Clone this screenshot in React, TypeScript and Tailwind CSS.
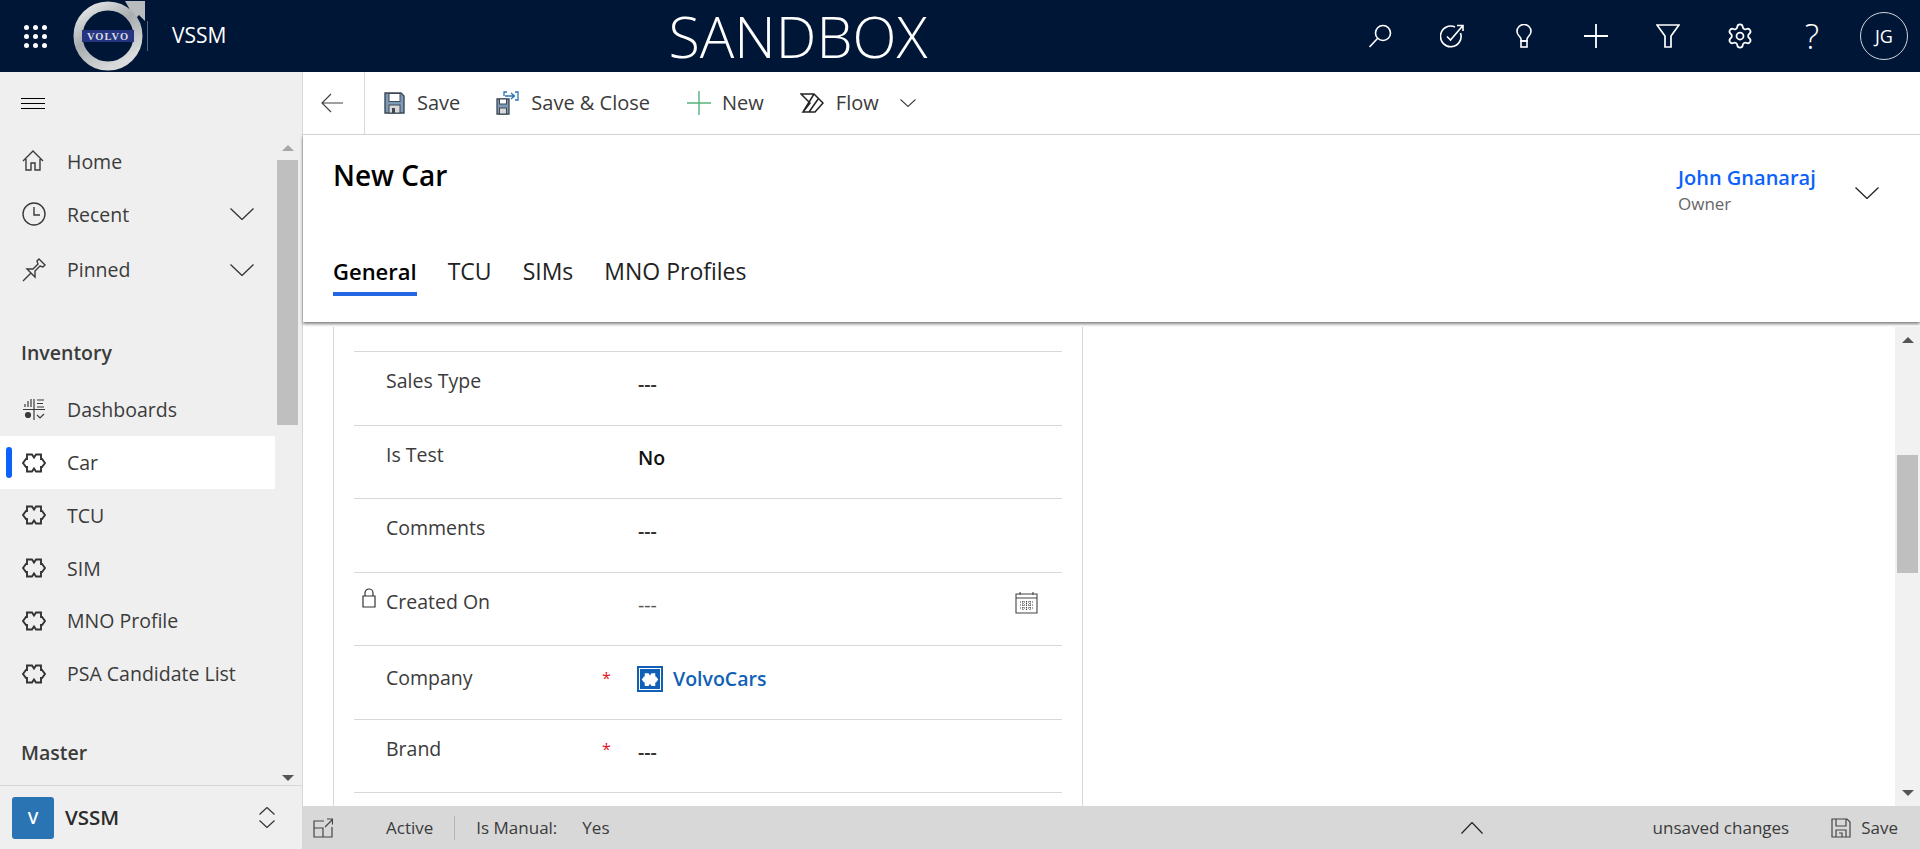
import { Settings } from "lucide-react";

function Puzzle({ className = "h-5 w-6 text-[#333]" }: { className?: string }) {
  return (
    <svg viewBox="0 0 24 20" className={className} fill="none" stroke="currentColor" strokeWidth="1.9">
      <path d="M5 1.5H10L12 4.5L14 1.5H19V6H20L23 10L20 14H19V18.5H14L12 15.5L10 18.5H5V14H4L1 10L4 6H5Z" />
    </svg>
  );
}

function FloppyColor({ className = "h-[22px] w-[21px]" }: { className?: string }) {
  return (
    <svg viewBox="0 0 21 22" className={className}>
      <path d="M1 1H17L20 4V21H1Z" fill="#7d9bb8" stroke="#3d4854" strokeWidth="1.4" />
      <rect x="5" y="1.5" width="11" height="8" fill="#fff" stroke="#3d4854" strokeWidth="1" />
      <rect x="5" y="13" width="11" height="8" fill="#d8d8d8" stroke="#3d4854" strokeWidth="1" />
      <rect x="8" y="16" width="3" height="5" fill="#3d4854" />
    </svg>
  );
}

function VolvoLogo() {
  return (
    <svg viewBox="0 0 74 72" className="h-[72px] w-[74px] shrink-0">
      <defs>
        <linearGradient id="ring" x1="0" y1="0" x2="0.6" y2="1">
          <stop offset="0" stopColor="#eceeee" />
          <stop offset="0.5" stopColor="#a9adb0" />
          <stop offset="1" stopColor="#d9dadb" />
        </linearGradient>
      </defs>
      <path d="M56 8L52 1H72V21L66 15L59 22Z" fill="#b9bcbf" />
      <circle cx="35" cy="36" r="30" fill="#001636" stroke="url(#ring)" strokeWidth="9" />
      <rect x="9" y="30" width="52" height="12" fill="#26357f" />
      <text x="35" y="39.5" textAnchor="middle" fontFamily="Liberation Serif, serif" fontWeight="700" fontSize="10.5" letterSpacing="1" fill="#d8dce6">
        VOLVO
      </text>
    </svg>
  );
}

const topIcons = [
  <svg key="search" viewBox="0 0 24 24" className="h-6 w-6" fill="none" stroke="#fff" strokeWidth="1.6">
    <circle cx="15" cy="9" r="7.5" />
    <path d="M9.5 14.5L1.5 23" />
  </svg>,
  <svg key="task" viewBox="0 0 24 24" className="h-6 w-6" fill="none" stroke="#fff" strokeWidth="1.6">
    <path d="M20.5 9A10.3 10.3 0 1 1 15 3" />
    <path d="M7 12.5L10.5 16L22.5 2M17 1.5H23V7" />
  </svg>,
  <svg key="bulb" viewBox="0 0 24 24" className="h-6 w-6" fill="none" stroke="#fff" strokeWidth="1.6">
    <path d="M9 17V15C9 13 5 11.5 5 7.5A7 7 0 0 1 19 7.5C19 11.5 15 13 15 15V17Z" />
    <rect x="9" y="17" width="6" height="6" />
  </svg>,
  <svg key="plus" viewBox="0 0 24 24" className="h-6 w-6" fill="none" stroke="#fff" strokeWidth="1.8">
    <path d="M12 0V24M0 12H24" />
  </svg>,
  <svg key="filter" viewBox="0 0 24 24" className="h-6 w-6" fill="none" stroke="#fff" strokeWidth="1.7">
    <path d="M1 1H23L15 12V23H9V12Z" />
  </svg>,
  <Settings key="gear" className="h-7 w-7 text-white" strokeWidth={1.5} />,
  <span key="help" className="text-[34px] leading-none font-light text-white">?</span>,
];

function NavRow({ label, icon, chevron, active }: { label: string; icon: React.ReactNode; chevron?: boolean; active?: boolean }) {
  return (
    <div className={`relative flex h-[52.8px] items-center pl-[22px] text-[#3b3b3b] ${active ? "bg-white" : ""}`}>
      {active && <span className="absolute top-[11px] left-[6px] h-[31px] w-[6px] rounded-[3px] bg-[#0b62fb]" />}
      <span className="flex w-[45px] shrink-0 items-center">{icon}</span>
      <span className="flex-1">{label}</span>
      {chevron && (
        <svg viewBox="0 0 24 12" className="mr-[21px] h-3 w-6" fill="none" stroke="#333" strokeWidth="1.3">
          <path d="M.5 .5L12 11.5L23.5 .5" />
        </svg>
      )}
    </div>
  );
}

function Sidebar() {
  return (
    <aside className="flex w-[303px] shrink-0 flex-col border-r border-[#d6d6d6] bg-[#efefef] text-[19.5px]">
      <div className="flex h-[63px] shrink-0 flex-col justify-center gap-[4px] pl-[21px]">
        <span className="h-px w-6 bg-black" />
        <span className="h-px w-6 bg-black" />
        <span className="h-px w-6 bg-black" />
      </div>
      <div className="flex min-h-0 flex-1 overflow-hidden">
        <nav className="w-[275px] shrink-0">
          <NavRow
            label="Home"
            icon={
              <svg viewBox="0 0 22 22" className="h-[22px] w-[22px]" fill="none" stroke="#3b3b3b" strokeWidth="1.4">
                <path d="M1 11L11 1L21 11M4 9V20H9V13H13V20H18V9" />
              </svg>
            }
          />
          <NavRow
            label="Recent"
            chevron
            icon={
              <svg viewBox="0 0 24 24" className="h-6 w-6" fill="none" stroke="#3b3b3b" strokeWidth="1.4">
                <circle cx="12" cy="12" r="11" />
                <path d="M12 5V13H18" />
              </svg>
            }
          />
          <div className="pt-[3px]">
            <NavRow
              label="Pinned"
              chevron
              icon={
                <svg viewBox="0 0 24 24" className="h-6 w-6" fill="none" stroke="#3b3b3b" strokeWidth="1.4">
                  <path d="M1 23L9 15M5 11L11 11L16 6L15 3L17 1L23 7L21 9L18 8L13 13L13 19Z" />
                </svg>
              }
            />
          </div>
          <div className="flex h-[87px] items-end pb-[16px] pl-[21px] font-semibold text-[#3b3b3b]">Inventory</div>
          <NavRow
            label="Dashboards"
            icon={
              <svg viewBox="0 0 24 24" className="h-6 w-6" fill="none" stroke="#3b3b3b" strokeWidth="1.2">
                <path d="M3 9V6M6 9V3M9 9V1M1 11.5H23M12 1V22M15 2H22M15 5.5H21M15 9H22M15 17L18 20L22 16" />
                <circle cx="6" cy="17" r="2.5" fill="#3b3b3b" />
              </svg>
            }
          />
          <NavRow label="Car" active icon={<Puzzle />} />
          <NavRow label="TCU" icon={<Puzzle />} />
          <NavRow label="SIM" icon={<Puzzle />} />
          <NavRow label="MNO Profile" icon={<Puzzle />} />
          <NavRow label="PSA Candidate List" icon={<Puzzle />} />
          <div className="flex h-[67px] items-end pl-[21px] font-semibold text-[#3b3b3b]">Master</div>
        </nav>
        <div className="flex flex-1 flex-col items-center pr-[2px]">
          <div className="flex h-[25px] w-full shrink-0 items-center justify-center">
            <span className="h-0 w-0 border-x-[6px] border-b-[6px] border-x-transparent border-b-[#a6a6a6]" />
          </div>
          <div className="h-[265px] w-[21px] bg-[#bfbfbf]" />
          <div className="flex flex-1 items-end pb-[4px]">
            <span className="h-0 w-0 border-x-[6px] border-t-[6px] border-x-transparent border-t-[#555]" />
          </div>
        </div>
      </div>
      <div className="flex h-[64px] shrink-0 items-center border-t border-[#d8d8d8] pl-3">
        <span className="flex h-[42px] w-[42px] items-center justify-center rounded-[3px] bg-[#2b74b4] text-[17px] font-semibold text-white">V</span>
        <span className="ml-[11px] flex-1 text-[20.5px] font-semibold text-[#2b2b2b]">VSSM</span>
        <span className="mr-[27px] flex flex-col gap-[5px]">
          <svg viewBox="0 0 16 8" className="h-2 w-4" fill="none" stroke="#333" strokeWidth="1.2">
            <path d="M.5 7.5L8 .5L15.5 7.5" />
          </svg>
          <svg viewBox="0 0 16 8" className="h-2 w-4" fill="none" stroke="#333" strokeWidth="1.2">
            <path d="M.5 .5L8 7.5L15.5 .5" />
          </svg>
        </span>
      </div>
    </aside>
  );
}

function CommandBar() {
  return (
    <div className="flex h-[63px] shrink-0 items-center border-b border-[#d8d8d8] text-[20px] text-[#3b3b3b]">
      <div className="flex h-full w-[62px] items-center justify-center border-r border-[#d8d8d8] pr-[3px]">
        <svg viewBox="0 0 22 20" className="h-5 w-[22px]" fill="none" stroke="#444" strokeWidth="1.2">
          <path d="M10 1L1 10L10 19M1 10H22" />
        </svg>
      </div>
      <div className="ml-[19px]">
        <FloppyColor />
      </div>
      <span className="ml-[12px]">Save</span>
      <svg viewBox="0 0 23 24" className="ml-[36px] h-6 w-[23px]">
        <path d="M1 8H13V23H1Z" fill="#7d9bb8" stroke="#3d4854" strokeWidth="1.3" />
        <rect x="3.5" y="8" width="7" height="5" fill="#fff" stroke="#3d4854" />
        <rect x="3.5" y="17" width="7" height="6" fill="#d8d8d8" stroke="#3d4854" />
        <path d="M8 5V1H11M19 1H22V9H19M9 5H18M15 2L18.5 5L15 8" fill="none" stroke="#2b74b4" strokeWidth="1.3" />
      </svg>
      <span className="ml-[12px]">Save &amp; Close</span>
      <svg viewBox="0 0 24 24" className="ml-[37px] h-6 w-6" fill="none" stroke="#54b27a" strokeWidth="1.4">
        <path d="M12 0V24M0 12H24" />
      </svg>
      <span className="ml-[11px]">New</span>
      <svg viewBox="0 0 24 20" className="ml-[36px] h-5 w-6" fill="none" stroke="#222" strokeWidth="1.5">
        <path d="M1 1H14L23 10L15 19H3L10 10ZM3 19L14 1M9 19L18.5 5.5" />
      </svg>
      <span className="ml-[12px]">Flow</span>
      <svg viewBox="0 0 16 8" className="ml-[21px] h-2 w-4" fill="none" stroke="#444" strokeWidth="1.1">
        <path d="M.5 .5L8 7.5L15.5 .5" />
      </svg>
    </div>
  );
}

function RecordHeader() {
  return (
    <div className="relative z-10 flex h-[187px] shrink-0 flex-col bg-white pl-[30px] shadow-[0_2px_3px_rgba(0,0,0,0.5)]">
      <div className="flex flex-1 justify-between pt-[20px]">
        <h1 className="text-[28px] leading-[40px] font-semibold text-black">New Car</h1>
        <div className="mr-[41px] flex items-start pt-[10px]">
          <div className="w-[177px]">
            <div className="text-[20px] leading-[26px] font-semibold text-[#0b62fb]">John Gnanaraj</div>
            <div className="text-[17px] leading-[26px] text-[#666]">Owner</div>
          </div>
          <svg viewBox="0 0 24 12" className="mt-[22px] h-3 w-6" fill="none" stroke="#222" strokeWidth="1.3">
            <path d="M.5 .5L12 11.5L23.5 .5" />
          </svg>
        </div>
      </div>
      <div className="mb-[24px] flex h-[54px] gap-[31px] text-[23px] leading-[30px] text-[#222]">
        <div className="h-[52px] border-b-4 border-[#2266e3] pt-[12px] text-[22px] font-semibold text-black">General</div>
        <div className="pt-[12px]">TCU</div>
        <div className="pt-[12px]">SIMs</div>
        <div className="pt-[12px]">MNO Profiles</div>
      </div>
    </div>
  );
}

function FormRow({ label, value, bold, required, locked, light, company }: { label: string; value?: string; bold?: boolean; required?: boolean; locked?: boolean; light?: boolean; company?: boolean }) {
  return (
    <div className={`flex h-[73.5px] items-start border-t border-[#d8d8d8] ${company ? "pt-[18px]" : "pt-[15px]"} text-[19.5px] leading-[28px]`}>
      <span className="flex h-7 w-8 shrink-0 justify-start pl-[8px]">
        {locked && (
          <svg viewBox="0 0 14 20" className="h-5 w-[14px]" fill="none" stroke="#333" strokeWidth="1.2">
            <path d="M3 8V5A4 4 0 0 1 11 5V8M1 8H13V19H1Z" />
          </svg>
        )}
      </span>
      <span className="w-[216px] shrink-0 text-[#3b3b3b]">{label}</span>
      <span className="w-[34px] shrink-0 text-[16px] text-[#e81123]">{required ? "*" : ""}</span>
      {value && (
        <span className={`pt-[3px] pl-[2px] ${bold ? "font-semibold text-[#111]" : light ? "text-[#555]" : "font-semibold text-[#333]"}`}>{value}</span>
      )}
      {locked && (
        <svg viewBox="0 0 23 23" className="mt-[3px] mr-[24px] ml-auto h-[23px] w-[23px]" fill="none" stroke="#444" strokeWidth="1.1">
          <path d="M1 3H22V22H1ZM1 7H22M5 1V4M18 1V4" />
          <path d="M5 11H18M5 14H18M5 17H18M8 10V20M11.5 10V20M15 10V20" strokeDasharray="1 1" />
        </svg>
      )}
      {company && (
        <span className="ml-[1px] flex items-center gap-[10px] pt-[1px] text-[19.5px] font-semibold text-[#1160b7]">
          <span className="flex h-[26px] w-[26px] items-center justify-center border-2 border-[#1160b7] bg-white">
            <span className="flex h-[20px] w-[20px] items-center justify-center bg-[#1160b7]">
              <svg viewBox="0 0 24 20" className="h-[15px] w-[18px]" fill="#fff">
                <path d="M5 1.5H10L12 4.5L14 1.5H19V6H20L23 10L20 14H19V18.5H14L12 15.5L10 18.5H5V14H4L1 10L4 6H5Z" />
              </svg>
            </span>
          </span>
          VolvoCars
        </span>
      )}
    </div>
  );
}

function FormArea() {
  return (
    <div className="flex min-h-0 flex-1 overflow-hidden pl-[30px]">
      <div className="mt-[5px] w-[750px] shrink-0 overflow-hidden border-x border-[#d8d8d8] px-[20px] pt-[24px]">
        <FormRow label="Sales Type" value="---" />
        <FormRow label="Is Test" value="No" bold />
        <FormRow label="Comments" value="---" />
        <FormRow label="Created On" value="---" locked light />
        <FormRow label="Company" required company />
        <FormRow label="Brand" value="---" required />
        <div className="border-t border-[#d8d8d8]" />
      </div>
      <div className="flex-1" />
      <div className="mt-[5px] flex w-[25px] shrink-0 flex-col items-center bg-[#f1f1f1]">
        <span className="mt-[10px] h-0 w-0 border-x-[6px] border-b-[6px] border-x-transparent border-b-[#555]" />
        <div className="mt-[112px] h-[118px] w-[21px] bg-[#bfbfbf]" />
        <span className="mt-auto mb-[10px] h-0 w-0 border-x-[6px] border-t-[6px] border-x-transparent border-t-[#555]" />
      </div>
    </div>
  );
}

function Footer() {
  return (
    <footer className="flex h-[43px] shrink-0 items-center bg-[#d8d8d8] text-[17px] text-[#3b3b3b]">
      <svg viewBox="0 0 20 20" className="ml-[10px] h-5 w-5" fill="none" stroke="#444" strokeWidth="1.2">
        <path d="M11 3H1V19H19V9M1 10H10V19M12 9L19 2M14 1H19.5V6.5" />
      </svg>
      <span className="ml-[53px]">Active</span>
      <span className="ml-[21px] h-[24px] w-px bg-[#b4b4b4]" />
      <span className="ml-[21px]">Is Manual:</span>
      <span className="ml-[25px]">Yes</span>
      <svg viewBox="0 0 22 12" className="ml-auto h-3 w-[22px]" fill="none" stroke="#222" strokeWidth="1.2">
        <path d="M.5 11.5L11 .5L21.5 11.5" />
      </svg>
      <span className="ml-[170px]">unsaved changes</span>
      <svg viewBox="0 0 20 20" className="ml-[42px] h-5 w-5" fill="none" stroke="#444" strokeWidth="1.2">
        <path d="M1 1H16L19 4V19H1Z" />
        <path d="M5 1V8H15V1M5 19V12H15V19M8 15H11V19" />
      </svg>
      <span className="mr-[22px] ml-[10px]">Save</span>
    </footer>
  );
}

export default function App() {
  return (
    <div className="flex h-screen w-full flex-col overflow-hidden bg-white font-['Open_Sans',sans-serif]">
      <header className="flex h-[72px] shrink-0 items-center bg-[#001636] text-white">
        <div className="ml-6 grid w-[23px] shrink-0 grid-cols-3 gap-[4px]">
          {Array.from({ length: 9 }).map((_, i) => (
            <span key={i} className="h-[5px] w-[5px] rounded-full bg-white" />
          ))}
        </div>
        <div className="ml-[26px]">
          <VolvoLogo />
        </div>
        <span className="h-[30px] w-px bg-[#55647c]" />
        <span className="ml-[24px] text-[21px]">VSSM</span>
        <span className="mr-auto ml-[442px] shrink-0 text-[57.5px] leading-[72px] font-light">SANDBOX</span>
        <div className="flex shrink-0">
          {topIcons.map((icon, i) => (
            <div key={i} className="flex h-[72px] w-[72px] items-center justify-center">
              {icon}
            </div>
          ))}
          <div className="flex h-[72px] w-[72px] items-center justify-center">
            <span className="flex h-12 w-12 items-center justify-center rounded-full border border-[#cfd4dc] text-[18px]">JG</span>
          </div>
        </div>
      </header>
      <div className="flex min-h-0 flex-1">
        <Sidebar />
        <main className="flex min-w-0 flex-1 flex-col">
          <CommandBar />
          <RecordHeader />
          <FormArea />
          <Footer />
        </main>
      </div>
    </div>
  );
}
